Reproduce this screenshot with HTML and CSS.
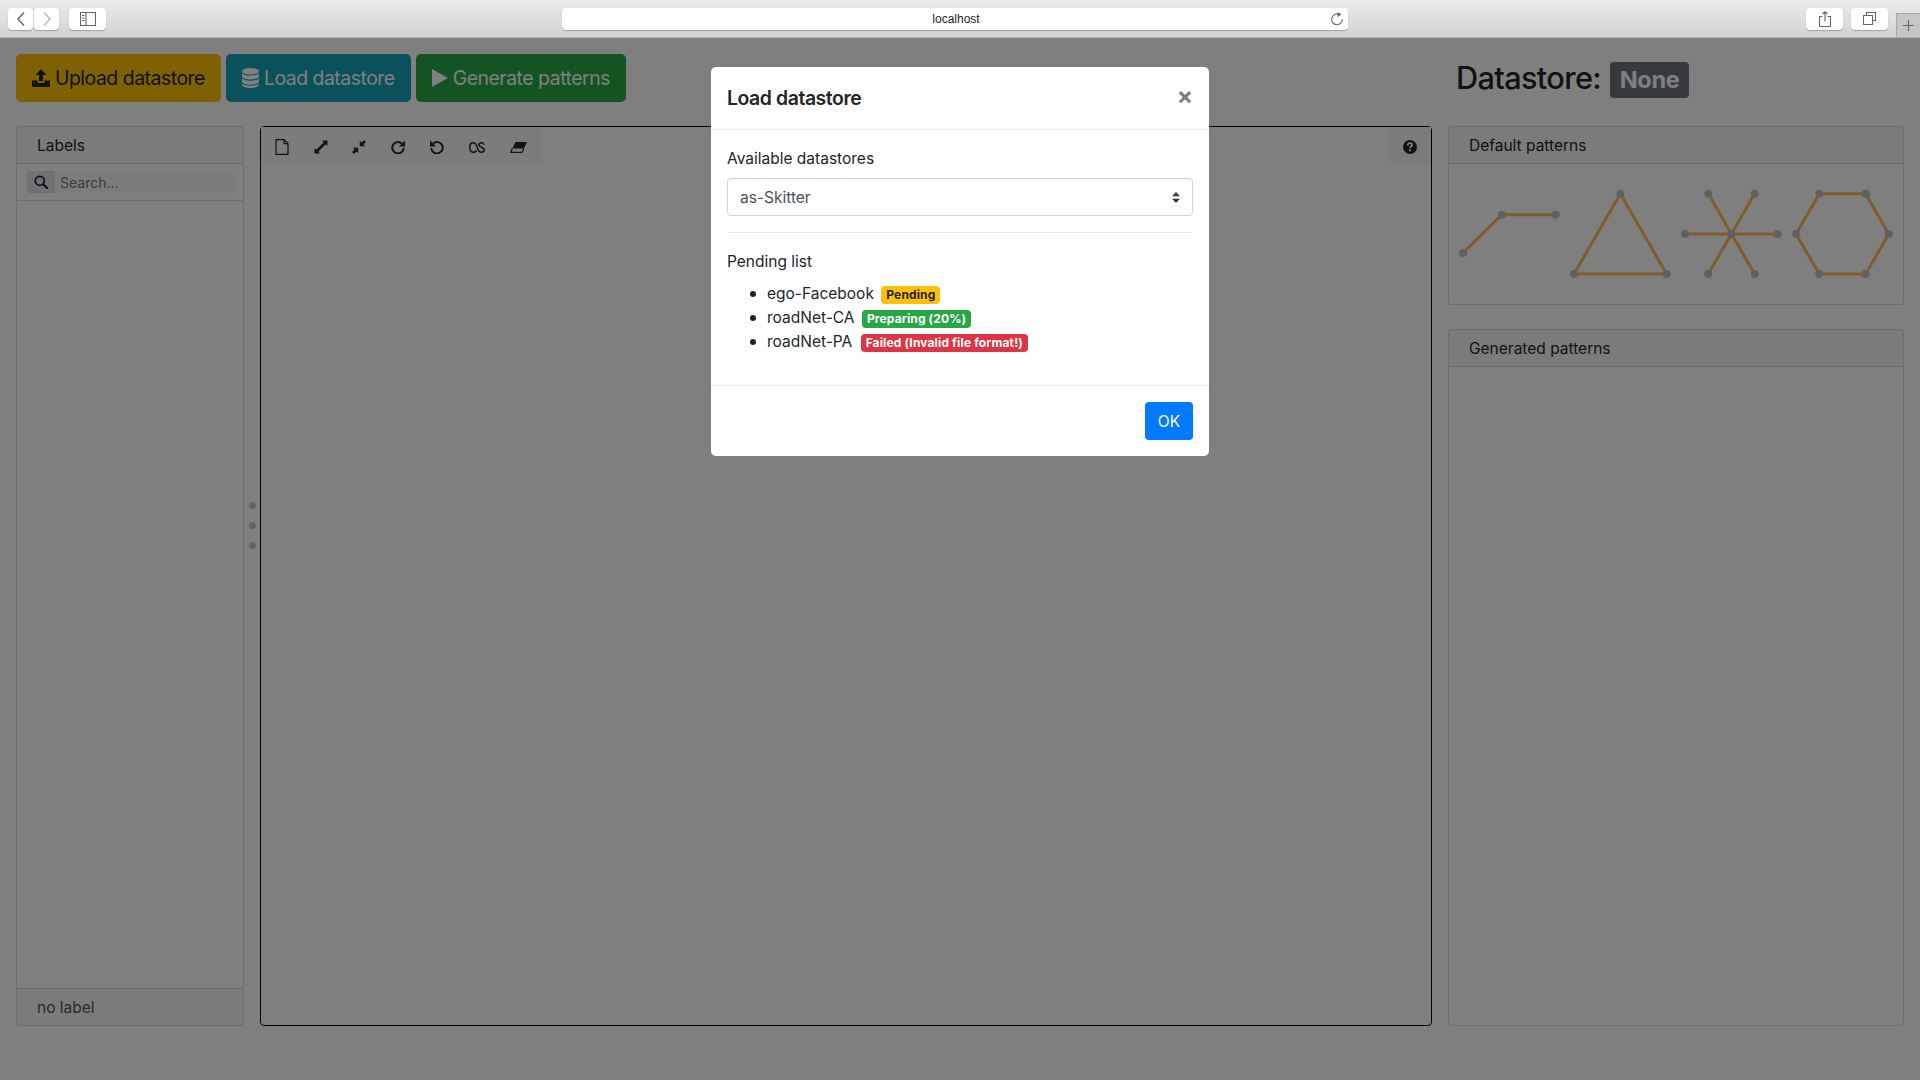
FILE: index.html

```html
<!DOCTYPE html>
<html lang="en">
<head>
  <meta charset="UTF-8" />
  <meta name="viewport" content="width=device-width, initial-scale=1.0" />
  <title>Load datastore</title>
  <link rel="stylesheet" href="styles.css">
</head>
<body>
  <div class="chrome">
    <div class="chrome-btn nav-btn"><svg width="10" height="16" viewBox="0 0 10 16"><path d="M8 1.5 2 8l6 6.500" class="chrome-line"/></svg></div>
    <div class="chrome-btn nav-btn nav-next"><svg width="10" height="16" viewBox="0 0 10 16"><path d="M2 1.500 8 8l-6 6.500" class="chrome-line faint"/></svg></div>
    <div class="chrome-btn side-btn"><svg width="16" height="14" viewBox="0 0 16 14"><path d="M.5.5h15v13H.5zM6 .5v13M2 3.500h2.500M2 6h2.500M2 8.500h2.500" class="chrome-line thin"/></svg></div>
    <div class="url-bar">
      <span class="url-text">localhost</span>
      <svg class="url-reload" width="14" height="14" viewBox="0 0 14 14"><path d="M8.800 2.400A5.300 5.300 0 1 0 12.300 7" class="chrome-line thin"/><path d="M7.500 0l4 2.500-4 2.500z" fill="#666"/></svg>
    </div>
    <div class="chrome-btn tool-btn share-btn"><svg width="12" height="16" viewBox="0 0 12 16"><path d="M3.500 5.500H.5v10h11v-10H8.500M6 10.500V.8M3.500 3 6 .8 8.500 3" class="chrome-line thin"/></svg></div>
    <div class="chrome-btn tool-btn"><svg width="13" height="13" viewBox="0 0 13 13"><path d="M3.500 3V.5h9v8H10M.5 3.500h9v9h-9z" class="chrome-line thin"/></svg></div>
    <div class="new-tab"><svg width="11" height="11" viewBox="0 0 11 11"><path d="M5.500 0v11M0 5.500h11" class="chrome-line thin"/></svg></div>
  </div>

  <div class="page">
    <div class="top-row">
      <div class="actions">
        <button class="btn-lg btn-warning">
          <svg width="18" height="18" viewBox="0 0 18 18"><path d="M9 0l5.500 6H11v6H7V6H3.500zM0 11.500h5.500V13a1 1 0 0 0 1 1h5a1 1 0 0 0 1-1v-1.500H18V17a1 1 0 0 1-1 1H1a1 1 0 0 1-1-1z" fill="#212529"/></svg>
          Upload datastore
        </button>
        <button class="btn-lg btn-info">
          <svg width="17" height="20" viewBox="0 0 17 20"><path d="M8.500 0C13 0 17 1.300 17 3.200S13 6.400 8.500 6.400 0 5.100 0 3.200 4 0 8.500 0zM0 5.300c1.500 1.500 5 2.300 8.500 2.300s7-.8 8.500-2.300v3.200c0 1.800-4 3.100-8.500 3.100S0 10.300 0 8.500zM0 10.400c1.500 1.500 5 2.300 8.500 2.300s7-.8 8.500-2.300v3.100c0 1.800-4 3.200-8.500 3.200S0 15.300 0 13.500zM0 15.500c1.500 1.500 5 2.200 8.500 2.200s7-.7 8.500-2.200v1.300c0 1.800-4 3.200-8.500 3.200S0 18.600 0 16.800z" fill="#fff"/></svg>
          Load datastore
        </button>
        <button class="btn-lg btn-success">
          <svg width="16" height="18" viewBox="0 0 16 18"><path d="M0 0l16 9-16 9z" fill="#fff"/></svg>
          Generate patterns
        </button>
      </div>
      <h2 class="store-title">Datastore: <span class="store-badge">None</span></h2>
    </div>

    <div class="workspace">
      <section class="card">
        <div class="card-header">Labels</div>
        <div class="search-row">
          <div class="search-group">
            <span class="search-icon"><svg width="14" height="14" viewBox="0 0 14 14"><circle cx="5.800" cy="5.800" r="4.500" fill="none" stroke="#212529" stroke-width="1.700"/><path d="M9 9l4 4" stroke="#212529" stroke-width="2.200" stroke-linecap="round"/></svg></span>
            <input class="search-input" type="text" placeholder="Search..." />
          </div>
        </div>
        <div class="card-fill"></div>
        <div class="card-footer">no label</div>
      </section>

      <div class="splitter">
        <span class="dot"></span>
        <span class="dot"></span>
        <span class="dot"></span>
      </div>

      <section class="canvas">
        <div class="canvas-tools">
          <div class="tool-strip">
            <span class="tool"><svg width="14" height="16" viewBox="0 0 14 16"><path d="M1 .7h8l4 4v10.600H1zM9 .7v4h4" class="tool-line thin"/></svg></span>
            <span class="tool"><svg width="14" height="14" viewBox="0 0 14 14"><path d="M8 .5H13.500V6L11.700 4.200 4.200 11.700 6 13.500H.5V8L2.300 9.800 9.800 2.300z" fill="#212529"/></svg></span>
            <span class="tool"><svg width="14" height="14" viewBox="0 0 14 14"><path d="M7.800 6.200V.8L9.500 2.500 12.100.1 13.900 1.900 11.500 4.500 13.200 6.200zM6.200 7.800v5.400L4.500 11.500 1.900 13.900.1 12.100 2.500 9.500.8 7.800z" fill="#212529"/></svg></span>
            <span class="tool"><svg width="14" height="14" viewBox="0 0 14 14"><path d="M10.800 3.500A5.700 5.700 0 1 0 12.700 8" class="tool-line"/><path d="M14 .5V6.500H8z" fill="#212529"/></svg></span>
            <span class="tool"><svg width="14" height="14" viewBox="0 0 14 14"><path d="M3.200 3.500A5.700 5.700 0 1 1 1.300 8" class="tool-line"/><path d="M0 .5V6.500H6z" fill="#212529"/></svg></span>
            <span class="tool tool-wide"><svg width="16" height="11" viewBox="0 0 15 10"><path d="M7.200 7.800C6.500 9 5.500 9.500 4.200 9.500 2.100 9.500.7 7.800.7 5 .7 2.300 2.200.6 4.200.6 6.500.6 7.300 3.200 7.900 5.400 8.500 7.500 9.400 9.500 11.700 9.500 13 9.500 14.300 8.700 14.300 7.200 14.300 4.600 9.700 5 9.400 3 9.200 1.700 10 .6 11.500.6 12.500.6 13.500 1.100 14 2.400" class="tool-line medium"/></svg></span>
            <span class="tool"><svg width="17" height="11" viewBox="0 0 17 11"><path d="M5.500 0H17L13.800 6.500H2.300z" fill="#212529"/><path d="M2.300 6.500.8 10.300H12L13.800 6.500" class="tool-line thin"/></svg></span>
          </div>
          <div class="help-strip">
            <svg width="14" height="14" viewBox="0 0 14 14"><circle cx="7" cy="7" r="7" fill="#212529"/><path d="M4.800 5.400C4.800 4 5.900 3.200 7 3.200 8.200 3.200 9.200 4 9.200 5.100 9.200 6.500 7 6.600 7 8.300" fill="none" stroke="#fff" stroke-width="1.700"/><path d="M6 9.500h2v1.800H6z" fill="#fff"/></svg>
          </div>
        </div>
      </section>

      <div class="side-col">
        <section class="card default-card">
          <div class="card-header">Default patterns</div>
          <div class="patterns">
            <svg class="pattern" width="111" height="140" viewBox="0 0 111 140">
              <path d="M9 89 47.700 50.700H101.700" class="edge"/>
              <g class="nodes"><circle cx="9" cy="89" r="4"/><circle cx="47.700" cy="50.700" r="4"/><circle cx="101.700" cy="50.700" r="4"/></g>
            </svg>
            <svg class="pattern" width="111" height="140" viewBox="0 0 111 140">
              <path d="M55.300 29.700 101.700 110H9z" class="edge"/>
              <g class="nodes"><circle cx="55.300" cy="29.700" r="4"/><circle cx="9" cy="110" r="4"/><circle cx="101.700" cy="110" r="4"/></g>
            </svg>
            <svg class="pattern" width="111" height="140" viewBox="0 0 111 140">
              <path d="M9 70H101.700M32.300 29.700 78.700 110M78.700 29.700 32.300 110" class="edge"/>
              <g class="nodes"><circle cx="55.300" cy="70" r="4"/><circle cx="9" cy="70" r="4"/><circle cx="101.700" cy="70" r="4"/><circle cx="32.300" cy="29.700" r="4"/><circle cx="78.700" cy="29.700" r="4"/><circle cx="32.300" cy="110" r="4"/><circle cx="78.700" cy="110" r="4"/></g>
            </svg>
            <svg class="pattern" width="111" height="140" viewBox="0 0 111 140">
              <path d="M32.300 29.700H78.700L101.700 70 78.700 110H32.300L9 70z" class="edge"/>
              <g class="nodes"><circle cx="32.300" cy="29.700" r="4"/><circle cx="78.700" cy="29.700" r="4"/><circle cx="9" cy="70" r="4"/><circle cx="101.700" cy="70" r="4"/><circle cx="32.300" cy="110" r="4"/><circle cx="78.700" cy="110" r="4"/></g>
            </svg>
          </div>
        </section>
        <section class="card generated-card">
          <div class="card-header">Generated patterns</div>
        </section>
      </div>
    </div>

    <div class="backdrop">
      <div class="modal">
        <div class="modal-header">
          <h5 class="modal-title">Load datastore</h5>
          <span class="modal-close">&times;</span>
        </div>
        <div class="modal-body">
          <label class="field-label" for="datastore">Available datastores</label>
          <div class="select-wrap">
            <select class="select" id="datastore">
              <option>as-Skitter</option>
            </select>
            <svg class="select-arrows" width="8" height="11" viewBox="0 0 8 11"><path d="M4 0 8 4.200H0zM4 11 0 6.800H8z" fill="#343a40"/></svg>
          </div>
          <hr class="divider" />
          <div class="pending-title">Pending list</div>
          <ul class="pending-list">
            <li>ego-Facebook <span class="badge badge-warning">Pending</span></li>
            <li>roadNet-CA <span class="badge badge-success">Preparing (20%)</span></li>
            <li>roadNet-PA <span class="badge badge-danger">Failed (Invalid file format!)</span></li>
          </ul>
        </div>
        <div class="modal-footer">
          <button class="btn-ok">OK</button>
        </div>
      </div>
    </div>
  </div>
</body>
</html>
```

FILE: styles.css

```css
* {
  box-sizing: border-box;
}
html, body {
  height: 100%;
}
body {
  margin: 0;
  display: flex;
  flex-direction: column;
  overflow: hidden;
  background-color: #fff;
  color: #212529;
  font-family: "Inter", "Liberation Sans", sans-serif;
  font-size: 15.500px;
  line-height: 24px;
}

/* browser bar */
.chrome {
  position: relative;
  display: flex;
  align-items: center;
  flex: 0 0 38px;
  padding: 0 8px;
  background: linear-gradient(#ececec, #d2d2d2);
  border-bottom: 1px solid #b1b1b1;
}
.chrome-btn {
  display: flex;
  align-items: center;
  justify-content: center;
  height: 22px;
  background-color: #fff;
  border-radius: 4px;
  box-shadow: 0 1px 1px rgba(0,0,0,0.25);
}
.nav-btn {
  width: 25px;
}
.nav-next {
  margin-left: 1px;
}
.side-btn {
  width: 37px;
  margin-left: 10px;
}
.tool-btn {
  width: 37px;
  margin-left: 8px;
}
.share-btn {
  margin-left: 458px;
}
.chrome-line {
  fill: none;
  stroke: #666;
  stroke-width: 1.5;
}
.chrome-line.thin {
  stroke-width: 1.1;
}
.chrome-line.faint {
  stroke: #bbb;
}
.url-bar {
  display: flex;
  align-items: center;
  justify-content: center;
  position: relative;
  width: 786px;
  height: 22px;
  margin-left: 456px;
  padding-left: 2px;
  background-color: #fff;
  border-radius: 4px;
  box-shadow: 0 1px 1px rgba(0,0,0,0.25);
}
.url-text {
  font-family: "Liberation Sans", sans-serif;
  font-size: 12px;
  line-height: 22px;
  color: #222;
}
.url-reload {
  position: absolute;
  right: 4px;
  top: 4px;
}
.new-tab {
  position: absolute;
  right: 0;
  bottom: 0;
  width: 24px;
  height: 24px;
  display: flex;
  align-items: center;
  justify-content: center;
  background-color: #c6c6c6;
  border-left: 1px solid #a8a8a8;
  border-top: 1px solid #a8a8a8;
}

/* page */
.page {
  position: relative;
  flex: 1;
  padding: 16px 16px 54px;
  display: flex;
  flex-direction: column;
  gap: 24px;
}
.top-row {
  display: flex;
  justify-content: space-between;
  height: 48px;
}
.actions {
  display: flex;
  gap: 5px;
}
.btn-lg {
  display: flex;
  align-items: center;
  gap: 5px;
  height: 48px;
  padding: 0 16px;
  border: none;
  border-radius: 5px;
  font-family: inherit;
  font-size: 19.400px;
  letter-spacing: -0.470px;
}
.btn-warning {
  background-color: #ffc107;
  color: #212529;
}
.btn-info {
  background-color: #17a2b8;
  color: #fff;
}
.btn-success {
  background-color: #28a745;
  color: #fff;
}
.store-title {
  width: 456px;
  margin: 0;
  padding-left: 8px;
  font-size: 30.700px;
  font-weight: 500;
  letter-spacing: -0.650px;
  line-height: 48px;
}
.store-badge {
  display: inline-block;
  margin-left: 2px;
  padding: 0 9.300px;
  background-color: #6c757d;
  border-radius: 4px;
  color: #fff;
  font-size: 23.500px;
  font-weight: 700;
  letter-spacing: -0.300px;
  line-height: 36px;
  vertical-align: 1px;
}

.workspace {
  flex: 1;
  min-height: 0;
  display: grid;
  grid-template-columns: 228px 16px 1172px 456px;
}
.card {
  display: flex;
  flex-direction: column;
  background-color: #fff;
  border: 1px solid rgba(0,0,0,0.125);
  border-radius: 4px;
}
.card-header {
  flex: 0 0 37px;
  padding: 1px 20px 0;
  background-color: rgba(0,0,0,0.03);
  border-bottom: 1px solid rgba(0,0,0,0.125);
  line-height: 35px;
}
.card-footer {
  flex: 0 0 37px;
  padding: 2px 20px 0;
  background-color: rgba(0,0,0,0.03);
  border-top: 1px solid rgba(0,0,0,0.125);
  color: #495057;
  line-height: 34px;
}
.card-fill {
  flex: 1;
}
.search-row {
  flex: 0 0 37px;
  padding: 7px 9px 7px 10px;
  border-bottom: 1px solid rgba(0,0,0,0.125);
}
.search-group {
  display: flex;
  height: 22px;
}
.search-icon {
  display: flex;
  align-items: center;
  justify-content: center;
  width: 28px;
  background-color: #dfe3e8;
  border-radius: 3px 0 0 3px;
}
.search-input {
  flex: 1;
  min-width: 0;
  padding: 0 5px;
  border: none;
  background-color: #f8f9fa;
  font-family: inherit;
  font-size: 14px;
}
.search-input::placeholder {
  color: #6c757d;
}

.splitter {
  display: flex;
  flex-direction: column;
  align-items: center;
  gap: 13px;
  padding-top: 376px;
}
.dot {
  width: 7px;
  height: 7px;
  border-radius: 50%;
  background-color: #c9c9c9;
}

.canvas {
  border: 1px solid #000;
  border-radius: 4px;
}
.canvas-tools {
  display: flex;
  justify-content: space-between;
}
.tool-strip {
  display: flex;
  align-items: center;
  height: 38px;
  padding: 2px 3px 0 2px;
  background-color: #f8f9fa;
}
.tool {
  display: flex;
  align-items: center;
  padding: 0 12.300px;
}
.tool-wide {
  padding: 0 13px 0 12.800px;
}
.tool-line {
  fill: none;
  stroke: #212529;
  stroke-width: 2;
}
.tool-line.thin {
  stroke-width: 1.200;
}
.tool-line.medium {
  stroke-width: 1.400;
}
.help-strip {
  display: flex;
  align-items: center;
  justify-content: center;
  width: 42px;
  height: 38px;
  padding-top: 2px;
  background-color: #f8f9fa;
}

.side-col {
  margin-left: 16px;
  width: 456px;
  display: flex;
  flex-direction: column;
  gap: 24px;
}
.default-card {
  flex: 0 0 179px;
}
.generated-card {
  flex: 1;
}
.patterns {
  display: flex;
  padding-left: 5px;
}
.edge {
  fill: none;
  stroke: #fdbb55;
  stroke-width: 3;
}
.nodes circle {
  fill: #c0c0c0;
}

/* modal */
.backdrop {
  position: absolute;
  inset: 0;
  display: flex;
  justify-content: center;
  align-items: flex-start;
  padding-top: 29px;
  background-color: rgba(0,0,0,0.5);
}
.modal {
  width: 498px;
  background-color: #fff;
  border-radius: 5px;
}
.modal-header {
  display: flex;
  justify-content: space-between;
  align-items: center;
  height: 63px;
  padding: 0 16px;
  border-bottom: 1px solid #e9ecef;
}
.modal-title {
  margin: 0;
  font-size: 19.400px;
  font-weight: 600;
  letter-spacing: -0.420px;
}
.modal-close {
  color: #7f7f7f;
  font-size: 24px;
  font-weight: 700;
  margin-top: -5px;
}
.modal-body {
  padding: 16px 16px 31px;
}
.field-label {
  display: block;
  padding-top: 1px;
  margin-bottom: 7px;
}
.select-wrap {
  position: relative;
}
.select {
  display: block;
  width: 100%;
  height: 38px;
  padding: 0 12px;
  background-color: #fff;
  border: 1px solid #ced4da;
  border-radius: 4px;
  color: #495057;
  font-family: inherit;
  font-size: 15.500px;
  appearance: none;
}
.select-arrows {
  position: absolute;
  right: 13px;
  top: 14px;
}
.divider {
  margin: 16px 0;
  border: none;
  border-top: 1px solid #e9ecef;
}
.pending-title {
  padding-top: 1px;
  margin-bottom: 8px;
}
.pending-list {
  margin: 0;
  padding-left: 40px;
  list-style: none;
}
.pending-list li {
  height: 24px;
}
.pending-list li::before {
  content: "";
  display: inline-block;
  width: 6px;
  height: 6px;
  margin: 0 11.500px 0 -17.500px;
  border-radius: 50%;
  background-color: #212529;
  vertical-align: 2.500px;
}
.badge {
  display: inline-block;
  margin-left: 3px;
  padding: 0 5px;
  border-radius: 4px;
  font-size: 12px;
  font-weight: 700;
  letter-spacing: 0.140px;
  line-height: 18px;
}
.badge-warning {
  background-color: #ffc107;
  color: #212529;
}
.badge-success {
  background-color: #28a745;
  color: #fff;
}
.badge-danger {
  margin-left: 4px;
  background-color: #dc3545;
  color: #fff;
}
.modal-footer {
  display: flex;
  justify-content: flex-end;
  height: 71px;
  padding: 16px;
  border-top: 1px solid #e9ecef;
}
.btn-ok {
  width: 48px;
  height: 38px;
  border: none;
  border-radius: 4px;
  background-color: #007bff;
  color: #fff;
  font-family: inherit;
  font-size: 15.500px;
}
```
